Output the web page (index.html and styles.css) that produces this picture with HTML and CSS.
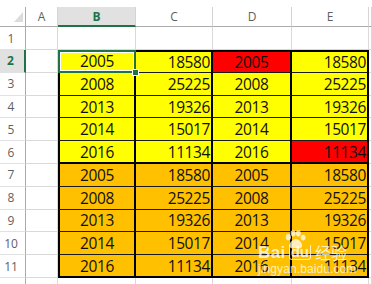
FILE: index.html
```html
<!DOCTYPE html>
<html>
<head>
<meta charset="utf-8">
<link rel="stylesheet" href="styles.css">
</head>
<body>
<div class="sheet">
  <div class="grid">
    <div class="hd corner"><span class="tri"></span></div>
    <div class="hd col">A</div>
    <div class="hd col sel">B</div>
    <div class="hd col">C</div>
    <div class="hd col">D</div>
    <div class="hd col">E</div>
    <div class="hd col"></div>

    <div class="rh">1</div>
    <div class="c"></div><div class="c"></div><div class="c"></div><div class="c"></div><div class="c"></div><div class="c"></div>

    <div class="rh sel">2</div>
    <div class="c"></div>
    <div class="d y ctr first top active">2005<span class="handle"></span></div>
    <div class="d y rt top">18580</div>
    <div class="d r ctr top">2005</div>
    <div class="d y rt top">18580</div>
    <div class="c"></div>

    <div class="rh">3</div>
    <div class="c"></div>
    <div class="d y ctr first">2008</div>
    <div class="d y rt">25225</div>
    <div class="d y ctr">2008</div>
    <div class="d y rt">25225</div>
    <div class="c"></div>

    <div class="rh">4</div>
    <div class="c"></div>
    <div class="d y ctr first">2013</div>
    <div class="d y rt">19326</div>
    <div class="d y ctr">2013</div>
    <div class="d y rt">19326</div>
    <div class="c"></div>

    <div class="rh">5</div>
    <div class="c"></div>
    <div class="d y ctr first">2014</div>
    <div class="d y rt">15017</div>
    <div class="d y ctr">2014</div>
    <div class="d y rt">15017</div>
    <div class="c"></div>

    <div class="rh">6</div>
    <div class="c"></div>
    <div class="d y ctr first thick">2016</div>
    <div class="d y rt thick">11134</div>
    <div class="d y ctr thick">2016</div>
    <div class="d r rt thick">11134</div>
    <div class="c"></div>

    <div class="rh">7</div>
    <div class="c"></div>
    <div class="d o ctr first">2005</div>
    <div class="d o rt">18580</div>
    <div class="d o ctr">2005</div>
    <div class="d o rt">18580</div>
    <div class="c"></div>

    <div class="rh">8</div>
    <div class="c"></div>
    <div class="d o ctr first">2008</div>
    <div class="d o rt">25225</div>
    <div class="d o ctr">2008</div>
    <div class="d o rt">25225</div>
    <div class="c"></div>

    <div class="rh">9</div>
    <div class="c"></div>
    <div class="d o ctr first">2013</div>
    <div class="d o rt">19326</div>
    <div class="d o ctr">2013</div>
    <div class="d o rt">19326</div>
    <div class="c"></div>

    <div class="rh">10</div>
    <div class="c"></div>
    <div class="d o ctr first">2014</div>
    <div class="d o rt">15017</div>
    <div class="d o ctr">2014</div>
    <div class="d o rt">15017</div>
    <div class="c"></div>

    <div class="rh">11</div>
    <div class="c"></div>
    <div class="d o ctr first thick">2016</div>
    <div class="d o rt thick">11134</div>
    <div class="d o ctr thick">2016</div>
    <div class="d o rt thick">11134</div>
    <div class="c"></div>

    <div class="rh"></div>
    <div class="c"></div><div class="c"></div><div class="c"></div><div class="c"></div><div class="c"></div><div class="c"></div>
  </div>

  <div class="wm">
    <svg class="paw" viewBox="0 0 24 20" width="25" height="19">
      <ellipse cx="4.5" cy="7.5" rx="2.7" ry="3.3"/>
      <ellipse cx="9.5" cy="3.5" rx="2.6" ry="3.3"/>
      <ellipse cx="15" cy="3.5" rx="2.6" ry="3.3"/>
      <ellipse cx="20" cy="8" rx="2.6" ry="3.1"/>
      <path d="M12.3 9.5 C8.8 9.5 5.6 13.8 5.6 16.3 C5.6 18.8 7.8 19.8 9.8 19.3 C11.3 18.9 13.3 18.9 14.8 19.3 C16.8 19.8 19 18.8 19 16.3 C19 13.8 15.8 9.5 12.3 9.5 Z"/>
    </svg>
    <div class="wm-top">
      <span class="wm-bai">Bai</span>
      <span class="wm-du">du</span>
      <span class="wm-cn">经验</span>
    </div>
    <div class="wm-url">jingyan.baidu.com</div>
  </div>
</div>
</body>
</html>
```

FILE: styles.css
```css
html, body {
  margin: 0;
  padding: 0;
  background: #fff;
}
body {
  width: 372px;
  height: 284px;
  overflow: hidden;
  font-family: "Open Sans", "Liberation Sans", sans-serif;
}
.sheet {
  position: relative;
  width: 372px;
  height: 284px;
  padding-top: 7px;
  box-sizing: border-box;
  overflow: hidden;
}
.grid {
  display: grid;
  grid-template-columns: 26px 32px 78px 77px 79px 77px 1fr;
  grid-template-rows: 20px 23px repeat(11, 22.8px);
}
.grid > div {
  box-sizing: border-box;
  display: flex;
  align-items: center;
  min-width: 0;
}
.hd {
  background: #fff;
  border-right: 1px solid #d4d4d4;
  border-bottom: 1px solid #ababab;
  justify-content: center;
  color: #5f5f5f;
  font-size: 12px;
  padding-bottom: 1px;
}
.corner {
  position: relative;
  border-right: 1px solid #ababab;
}
.tri {
  position: absolute;
  right: 2px;
  bottom: 4px;
  width: 0;
  height: 0;
  border-left: 9px solid transparent;
  border-bottom: 10px solid #dcdcdc;
}
.hd.sel {
  background: #e1e1e1;
  color: #217346;
  font-weight: 700;
  border-bottom: 2px solid #217346;
  padding-bottom: 0;
}
.rh {
  justify-content: center;
  padding-right: 3px;
  color: #5f5f5f;
  font-size: 12px;
  border-right: 1px solid #ababab;
  border-bottom: 1px solid #e1e1e1;
  background: #fff;
}
.rh.sel {
  background: #e1e1e1;
  color: #217346;
  font-weight: 700;
  border-right: 2px solid #217346;
}
.c {
  border-right: 1px solid #d9d9d9;
  border-bottom: 1px solid #d9d9d9;
}
.d {
  position: relative;
  border-right: 2px solid #000;
  border-bottom: 1px solid #1a1a1a;
  font-size: 15.5px;
  color: #111;
  letter-spacing: -0.4px;
}
.d.first { border-left: 2px solid #000; }
.d.top { border-top: 2px solid #000; }
.d.thick { border-bottom: 2px solid #000; }
.y { background: #ffff00; }
.o { background: #ffc000; }
.r { background: #ff0000; }
.ctr { justify-content: center; }
.rt { justify-content: flex-end; padding-right: 1px; }
.d.active {
  border: 2px solid #217346;
  box-shadow: inset 0 0 0 1px #fff;
  overflow: visible;
}
.handle {
  position: absolute;
  right: -5px;
  bottom: -5px;
  width: 5px;
  height: 5px;
  background: #217346;
  border: 1px solid #fff;
  z-index: 2;
}

/* watermark */
.wm {
  position: absolute;
  left: 258px;
  top: 230px;
  width: 94px;
  color: rgba(255, 255, 255, 0.75);
  font-family: "Liberation Sans", Arial, sans-serif;
  z-index: 5;
}
.paw {
  position: absolute;
  left: 25px;
  top: 0;
  fill: rgba(255, 255, 255, 0.75);
}
.wm-top {
  display: flex;
  align-items: flex-end;
  padding-top: 14px;
}
.wm-bai {
  font-size: 17px;
  font-weight: 700;
  line-height: 15px;
  letter-spacing: 0.4px;
}
.wm-du {
  margin-left: 3px;
  font-size: 15px;
  font-weight: 700;
  line-height: 13px;
  padding: 0 1px 1px;
  border: 1px solid rgba(255, 255, 255, 0.75);
  border-top: 0;
  border-radius: 0 0 3px 3px;
}
.wm-cn {
  margin-left: 4px;
  font-family: "Noto Sans CJK SC", sans-serif;
  font-size: 16px;
  line-height: 16px;
}
.wm-url {
  margin-top: 3px;
  font-size: 12px;
  line-height: 13px;
  letter-spacing: 0.1px;
}
```
